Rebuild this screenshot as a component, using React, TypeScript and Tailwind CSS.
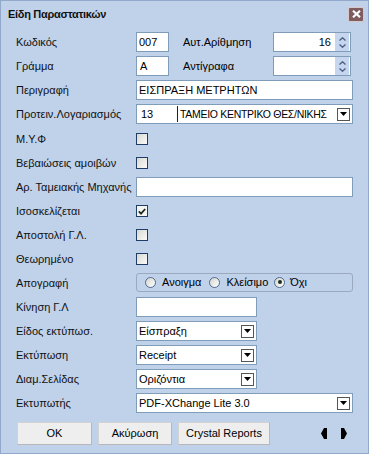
import React from "react";

const Label = ({ children, w = "w-[120px]" }: { children: React.ReactNode; w?: string }) => (
  <div className={`${w} shrink-0 text-[#111] whitespace-nowrap`}>{children}</div>
);

const DropBtn = () => (
  <div className="w-[13px] h-[13px] border border-[#555] bg-white flex items-center justify-center shrink-0">
    <svg width="7" height="4" viewBox="0 0 7 4">
      <polygon points="0,0 7,0 3.5,4" fill="#000" />
    </svg>
  </div>
);

const Spinner = () => (
  <div className="w-[14px] h-[18px] bg-[#c6d6ef] flex flex-col items-center justify-center gap-[3px] shrink-0">
    <svg width="7" height="4" viewBox="0 0 7 4">
      <polyline points="0.5,3.5 3.5,0.8 6.5,3.5" fill="none" stroke="#4d6185" strokeWidth="1.4" />
    </svg>
    <svg width="7" height="4" viewBox="0 0 7 4">
      <polyline points="0.5,0.5 3.5,3.2 6.5,0.5" fill="none" stroke="#4d6185" strokeWidth="1.4" />
    </svg>
  </div>
);

const Checkbox = ({ checked = false }: { checked?: boolean }) => (
  <div
    className={`w-[12px] h-[12px] border border-[#1f3d66] flex items-center justify-center ${
      checked ? "bg-[#f4f4f2]" : "bg-gradient-to-br from-[#d8d8d2] to-[#fbfbfa]"
    }`}
  >
    {checked && (
      <svg width="8" height="7" viewBox="0 0 8 7">
        <polyline points="0.8,3.4 3,5.6 7.2,1" fill="none" stroke="#1b2a1b" strokeWidth="1.8" />
      </svg>
    )}
  </div>
);

const Radio = ({ checked = false }: { checked?: boolean }) => (
  <div className="w-[11px] h-[11px] rounded-full border border-[#4f6a8f] bg-gradient-to-br from-[#d4d4ce] to-white flex items-center justify-center shrink-0">
    {checked && <div className="w-[4px] h-[4px] rounded-full bg-[#1e2e1e]" />}
  </div>
);

const Input = ({ className = "", children }: { className?: string; children?: React.ReactNode }) => (
  <div className={`h-[20px] bg-white border border-[#7f9db9] flex items-center whitespace-nowrap overflow-hidden ${className}`}>
    {children}
  </div>
);

const Select = ({ w, text }: { w: string; text: string }) => (
  <Input className={`${w} pl-[2px] pr-[2px] justify-between`}>
    <span>{text}</span>
    <DropBtn />
  </Input>
);

const Row = ({ children, className = "" }: { children: React.ReactNode; className?: string }) => (
  <div className={`h-[24px] flex items-center ${className}`}>{children}</div>
);

const Btn = ({ children, w }: { children: React.ReactNode; w: string }) => (
  <div className={`${w} h-[23px] bg-[#eeeeee] border border-[#d2d2d2] border-r-[#b8b8b8] border-b-[#b8b8b8] flex items-center justify-center`}>
    {children}
  </div>
);

export default function App() {
  return (
    <div className="w-[369px] h-[454px] bg-[#c0d1ea] border border-[#92a9cb] font-['Liberation_Sans',Arial,sans-serif] text-[11px] leading-none text-black flex flex-col overflow-hidden">
      <div className="h-[25px] flex items-center justify-between pl-[7px] pr-[4px] shrink-0">
        <span className="font-bold text-[11px] tracking-[-0.3px] text-[#111] pt-[1px]">Είδη Παραστατικών</span>
        <div className="w-[16px] h-[15px] rounded-[2px] bg-[#7e5c60] border border-[#d9c8c8] flex items-center justify-center mt-[1px]">
          <svg width="9" height="8" viewBox="0 0 9 8">
            <path d="M1,0.8 L8,7.2 M8,0.8 L1,7.2" stroke="#fff" strokeWidth="2.2" />
          </svg>
        </div>
      </div>
      <div className="pt-[4px] pl-[15px] flex flex-col">
        <Row>
          <Label>Κωδικός</Label>
          <Input className="w-[33px] pl-[2px]">007</Input>
          <div className="ml-[14px] w-[90px]">Αυτ.Αρίθμηση</div>
          <Input className="w-[78px] justify-end pr-px">
            <span className="mr-[4px]">16</span>
            <Spinner />
          </Input>
        </Row>
        <Row>
          <Label>Γράμμα</Label>
          <Input className="w-[33px] pl-[3px]">Α</Input>
          <div className="ml-[14px] w-[90px]">Αντίγραφα</div>
          <Input className="w-[78px] justify-end pr-px">
            <Spinner />
          </Input>
        </Row>
        <Row>
          <Label>Περιγραφή</Label>
          <Input className="w-[217px] pl-[2px]">ΕΙΣΠΡΑΞΗ ΜΕΤΡΗΤΩΝ</Input>
        </Row>
        <Row>
          <Label>Προτειν.Λογαριασμός</Label>
          <Input className="w-[217px] pl-[4px] pr-[2px]">
            <span className="w-[36px] shrink-0">13</span>
            <div className="w-px h-[16px] bg-[#222] mr-[2px] shrink-0" />
            <span className="flex-1 text-[10.5px] tracking-[-0.3px] overflow-hidden">ΤΑΜΕΙΟ ΚΕΝΤΡΙΚΟ ΘΕΣ/ΝΙΚΗΣ</span>
            <DropBtn />
          </Input>
        </Row>
        <Row className="mt-px">
          <Label>Μ.Υ.Φ</Label>
          <Checkbox />
        </Row>
        <Row>
          <Label>Βεβαιώσεις αμοιβών</Label>
          <Checkbox />
        </Row>
        <Row>
          <Label>Αρ. Ταμειακής Μηχανής</Label>
          <Input className="w-[217px]" />
        </Row>
        <Row>
          <Label>Ισοσκελίζεται</Label>
          <Checkbox checked />
        </Row>
        <Row>
          <Label>Αποστολή Γ.Λ.</Label>
          <Checkbox />
        </Row>
        <Row>
          <Label>Θεωρημένο</Label>
          <Checkbox />
        </Row>
        <Row>
          <Label>Απογραφή</Label>
          <div className="w-[217px] h-[19px] mt-[-2px] rounded-[3px] border border-[#9aa9bd] flex items-center pl-[8px]">
            <Radio />
            <span className="ml-[6px]">Ανοιγμα</span>
            <div className="ml-[8px]">
              <Radio />
            </div>
            <span className="ml-[6px]">Κλείσιμο</span>
            <div className="ml-[6px]">
              <Radio checked />
            </div>
            <span className="ml-[5px]">Όχι</span>
          </div>
        </Row>
        <Row>
          <Label>Κίνηση Γ.Λ</Label>
          <Input className="w-[121px]" />
        </Row>
        <Row>
          <Label>Είδος εκτύπωσ.</Label>
          <Select w="w-[121px]" text="Είσπραξη" />
        </Row>
        <Row>
          <Label>Εκτύπωση</Label>
          <Select w="w-[121px]" text="Receipt" />
        </Row>
        <Row>
          <Label>Διαμ.Σελίδας</Label>
          <Select w="w-[121px]" text="Οριζόντια" />
        </Row>
        <Row>
          <Label>Εκτυπωτής</Label>
          <Select w="w-[217px]" text="PDF-XChange Lite 3.0" />
        </Row>
        <div className="mt-[7px] flex items-center pl-px">
          <Btn w="w-[75px]">OK</Btn>
          <div className="ml-[6px]">
            <Btn w="w-[74px]">Ακύρωση</Btn>
          </div>
          <div className="ml-[6px]">
            <Btn w="w-[92px]">Crystal Reports</Btn>
          </div>
          <div className="ml-[51px] flex items-center gap-[14px]">
            <svg width="6" height="11" viewBox="0 0 6 11">
              <polygon points="6,0 6,11 3,11 0,5.5 3,0" fill="#000" />
            </svg>
            <svg width="6" height="11" viewBox="0 0 6 11">
              <polygon points="0,0 0,11 3,11 6,5.5 3,0" fill="#000" />
            </svg>
          </div>
        </div>
      </div>
    </div>
  );
}
